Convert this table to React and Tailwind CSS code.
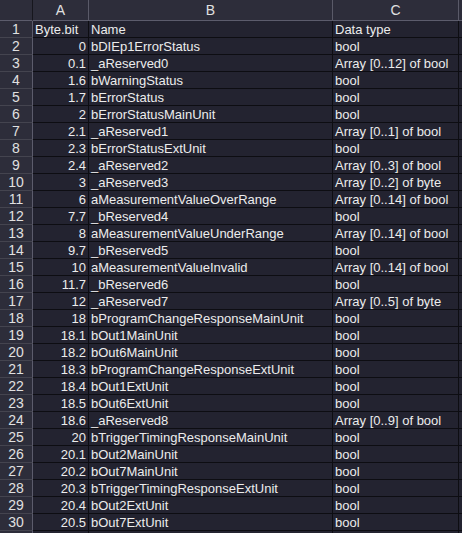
import React from 'react'

const rows = [
  ['Byte.bit', 'Name', 'Data type', true],
  ['0', 'bDIEp1ErrorStatus', 'bool'],
  ['0.1', '_aReserved0', 'Array [0..12] of bool'],
  ['1.6', 'bWarningStatus', 'bool'],
  ['1.7', 'bErrorStatus', 'bool'],
  ['2', 'bErrorStatusMainUnit', 'bool'],
  ['2.1', '_aReserved1', 'Array [0..1] of bool'],
  ['2.3', 'bErrorStatusExtUnit', 'bool'],
  ['2.4', '_aReserved2', 'Array [0..3] of bool'],
  ['3', '_aReserved3', 'Array [0..2] of byte'],
  ['6', 'aMeasurementValueOverRange', 'Array [0..14] of bool'],
  ['7.7', '_bReserved4', 'bool'],
  ['8', 'aMeasurementValueUnderRange', 'Array [0..14] of bool'],
  ['9.7', '_bReserved5', 'bool'],
  ['10', 'aMeasurementValueInvalid', 'Array [0..14] of bool'],
  ['11.7', '_bReserved6', 'bool'],
  ['12', '_aReserved7', 'Array [0..5] of byte'],
  ['18', 'bProgramChangeResponseMainUnit', 'bool'],
  ['18.1', 'bOut1MainUnit', 'bool'],
  ['18.2', 'bOut6MainUnit', 'bool'],
  ['18.3', 'bProgramChangeResponseExtUnit', 'bool'],
  ['18.4', 'bOut1ExtUnit', 'bool'],
  ['18.5', 'bOut6ExtUnit', 'bool'],
  ['18.6', '_aReserved8', 'Array [0..9] of bool'],
  ['20', 'bTriggerTimingResponseMainUnit', 'bool'],
  ['20.1', 'bOut2MainUnit', 'bool'],
  ['20.2', 'bOut7MainUnit', 'bool'],
  ['20.3', 'bTriggerTimingResponseExtUnit', 'bool'],
  ['20.4', 'bOut2ExtUnit', 'bool'],
  ['20.5', 'bOut7ExtUnit', 'bool'],
  ['', '', ''],
]

const cell = 'h-[17px] bg-[#232330] border-r border-b border-[#0d0d12] px-[2px] leading-[17px] whitespace-nowrap overflow-hidden'

export default function App() {
  return (
    <div
      className="w-[462px] h-[533px] overflow-hidden bg-[#232330] text-[13px] text-[#ececec]"
      style={{ fontFamily: '"Liberation Sans", Arial, sans-serif' }}
    >
      <div className="grid grid-cols-[33px_56px_244px_126px_60px]">
        {/* header row */}
        <div className="h-[21px] bg-[#2d2d3a] border-r border-b border-r-[#16161d] border-b-[#5c5c6c]" />
        {['A', 'B', 'C', ''].map((l, i) => (
          <div
            key={i}
            className="h-[21px] bg-[#2d2d3a] border-r border-b border-r-[#5a5a68] border-b-[#5c5c6c] text-center leading-[21px] text-[14px] text-[#e0e0e0]"
          >
            {l}
          </div>
        ))}

        {rows.map((r, i) => (
          <React.Fragment key={i}>
            <div className="h-[17px] bg-[#2d2d3a] border-r border-b border-r-[#5c5c6c] border-b-[#44444f] text-center leading-[17px] text-[14px] text-[#e0e0e0] overflow-hidden">
              {i < 30 ? i + 1 : ''}
            </div>
            <div className={`${cell} ${r[3] ? 'text-left' : 'text-right'}`}>{r[0]}</div>
            <div className={cell}>{r[1]}</div>
            <div className={cell}>{r[2]}</div>
            <div className={cell} />
          </React.Fragment>
        ))}
      </div>
    </div>
  )
}
